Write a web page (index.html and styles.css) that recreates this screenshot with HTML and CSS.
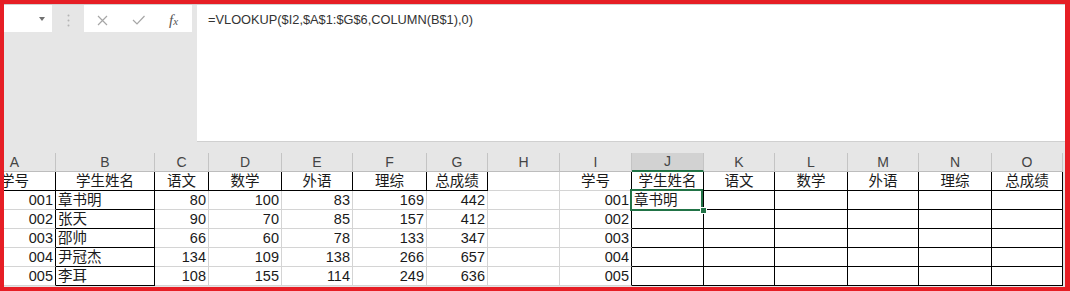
FILE: index.html
```html
<!DOCTYPE html>
<html lang="zh-CN">
<head>
    <meta charset="UTF-8">
    <meta name="viewport" content="width=device-width, initial-scale=1.0">
    <title>VLOOKUP 成绩查询</title>
    <link rel="stylesheet" href="styles.css">
</head>
<body>
    <div class="window">
        <div class="toolbar">
            <div class="namebox"><span class="drop"></span></div>
            <div class="grip">
                <svg width="3" height="13" viewBox="0 0 3 13"><circle cx="1.5" cy="1.5" r="1"/><circle cx="1.5" cy="6.5" r="1"/><circle cx="1.5" cy="11.5" r="1"/></svg>
            </div>
            <div class="fnbox">
                <svg class="ico cancel" width="11" height="11" viewBox="0 0 11 11"><path d="M1 1L10 10M10 1L1 10"/></svg>
                <svg class="ico enter" width="13" height="10" viewBox="0 0 13 10"><path d="M1 5L5 9L12.5 1"/></svg>
                <span class="fx">f<span>x</span></span>
            </div>
            <div class="formula">=VLOOKUP($I2,$A$1:$G$6,COLUMN(B$1),0)</div>
        </div>

        <div class="sheet">
            <div class="grid">
                <!-- column headers -->
                <div class="c h">A</div>
                <div class="c h">B</div>
                <div class="c h">C</div>
                <div class="c h">D</div>
                <div class="c h">E</div>
                <div class="c h">F</div>
                <div class="c h">G</div>
                <div class="c h">H</div>
                <div class="c h">I</div>
                <div class="c h hsel">J</div>
                <div class="c h">K</div>
                <div class="c h">L</div>
                <div class="c h">M</div>
                <div class="c h">N</div>
                <div class="c h">O</div>

                <!-- row 1 -->
                <div class="c ctr br bb">学号</div>
                <div class="c ctr br bb">学生姓名</div>
                <div class="c ctr br bb">语文</div>
                <div class="c ctr br bb">数学</div>
                <div class="c ctr br bb">外语</div>
                <div class="c ctr br bb">理综</div>
                <div class="c ctr br bb">总成绩</div>
                <div class="c"></div>
                <div class="c ctr br">学号</div>
                <div class="c ctr br bb">学生姓名</div>
                <div class="c ctr br bb">语文</div>
                <div class="c ctr br bb">数学</div>
                <div class="c ctr br bb">外语</div>
                <div class="c ctr br bb">理综</div>
                <div class="c ctr br bb">总成绩</div>

                <!-- row 2 -->
                <div class="c num br">001</div>
                <div class="c br bb">章书明</div>
                <div class="c num">80</div>
                <div class="c num">100</div>
                <div class="c num">83</div>
                <div class="c num">169</div>
                <div class="c num">442</div>
                <div class="c"></div>
                <div class="c num br">001</div>
                <div class="c br bb sel">章书明</div>
                <div class="c br bb"></div>
                <div class="c br bb"></div>
                <div class="c br bb"></div>
                <div class="c br bb"></div>
                <div class="c br bb"></div>

                <!-- row 3 -->
                <div class="c num br">002</div>
                <div class="c br bb">张天</div>
                <div class="c num">90</div>
                <div class="c num">70</div>
                <div class="c num">85</div>
                <div class="c num">157</div>
                <div class="c num">412</div>
                <div class="c"></div>
                <div class="c num br">002</div>
                <div class="c br bb"></div>
                <div class="c br bb"></div>
                <div class="c br bb"></div>
                <div class="c br bb"></div>
                <div class="c br bb"></div>
                <div class="c br bb"></div>

                <!-- row 4 -->
                <div class="c num br">003</div>
                <div class="c br bb">邵帅</div>
                <div class="c num">66</div>
                <div class="c num">60</div>
                <div class="c num">78</div>
                <div class="c num">133</div>
                <div class="c num">347</div>
                <div class="c"></div>
                <div class="c num br">003</div>
                <div class="c br bb"></div>
                <div class="c br bb"></div>
                <div class="c br bb"></div>
                <div class="c br bb"></div>
                <div class="c br bb"></div>
                <div class="c br bb"></div>

                <!-- row 5 -->
                <div class="c num br">004</div>
                <div class="c br bb">尹冠杰</div>
                <div class="c num">134</div>
                <div class="c num">109</div>
                <div class="c num">138</div>
                <div class="c num">266</div>
                <div class="c num">657</div>
                <div class="c"></div>
                <div class="c num br">004</div>
                <div class="c br bb"></div>
                <div class="c br bb"></div>
                <div class="c br bb"></div>
                <div class="c br bb"></div>
                <div class="c br bb"></div>
                <div class="c br bb"></div>

                <!-- row 6 -->
                <div class="c num br">005</div>
                <div class="c br bb">李耳</div>
                <div class="c num">108</div>
                <div class="c num">155</div>
                <div class="c num">114</div>
                <div class="c num">249</div>
                <div class="c num">636</div>
                <div class="c"></div>
                <div class="c num br">005</div>
                <div class="c br bb"></div>
                <div class="c br bb"></div>
                <div class="c br bb"></div>
                <div class="c br bb"></div>
                <div class="c br bb"></div>
                <div class="c br bb"></div>
            </div>
        </div>
    </div>
</body>
</html>
```

FILE: styles.css
```css
body {
    margin: 0;
    font-family: "Liberation Sans", "Noto Sans CJK SC", sans-serif;
}
.window {
    width: 1070px;
    height: 291px;
    box-sizing: border-box;
    border: 4px solid #e61e25;
    border-right-width: 5px;
    background-color: #e6e6e6;
    display: flex;
    flex-direction: column;
    overflow: hidden;
}

/* formula bar */
.toolbar {
    height: 149px;
    flex-shrink: 0;
    box-sizing: border-box;
    border-top: 1px solid #d0d0d0;
    display: flex;
    align-items: flex-start;
}
.namebox {
    width: 48px;
    height: 27px;
    box-sizing: border-box;
    background-color: #fff;
    display: flex;
    justify-content: flex-end;
    align-items: center;
    padding: 1px 7px 0 0;
}
.drop {
    width: 0;
    height: 0;
    border-left: 3px solid transparent;
    border-right: 3px solid transparent;
    border-top: 4px solid #707070;
}
.grip {
    width: 32px;
    height: 27px;
    display: flex;
    justify-content: center;
    align-items: center;
    padding-top: 3px;
    box-sizing: border-box;
}
.grip svg {
    fill: #b4b4b4;
}
.fnbox {
    width: 108px;
    height: 27px;
    box-sizing: border-box;
    background-color: #fff;
    display: flex;
    align-items: center;
    padding: 3px 0 0 13px;
}
.ico {
    fill: none;
    stroke: #a6a6a6;
    stroke-width: 1.2;
}
.enter {
    margin-left: 24px;
}
.fx {
    margin-left: 24px;
    font-family: "Liberation Serif", serif;
    font-style: italic;
    font-size: 15px;
    color: #555;
    line-height: 1;
}
.fx span {
    font-size: 11px;
}
.formula {
    flex: 1;
    height: 137px;
    margin-left: 5px;
    box-sizing: border-box;
    background-color: #fff;
    border-bottom: 1px solid #d0d0d0;
    padding: 7px 11px;
    font-size: 12.8px;
    line-height: 16px;
    color: #333;
}

/* worksheet */
.sheet {
    flex: 1;
    overflow: hidden;
}
.grid {
    display: grid;
    grid-template-columns: 82px 99px 54px 73px 71px 74px 61px 72px 72px 72px 71px 73px 71px 73px 71px;
    grid-auto-rows: 19px;
    margin-left: -30px;
    width: max-content;
}
.c {
    box-sizing: border-box;
    border-right: 1px solid #d4d4d4;
    border-bottom: 1px solid #d4d4d4;
    background-color: #fff;
    padding: 0 2px;
    font-size: 14.5px;
    line-height: 18px;
    color: #1a1a1a;
    white-space: nowrap;
}
.h {
    background-color: #e6e6e6;
    border-right-color: #c4c4c4;
    border-bottom-color: #bdbdbd;
    text-align: center;
    font-size: 14px;
    color: #444;
}
.hsel {
    background-color: #d2d2d2;
    border-bottom: 2px solid #217346;
    line-height: 17px;
}
.ctr {
    text-align: center;
}
.num {
    text-align: right;
}
.br {
    border-right-color: #000;
}
.bb {
    border-bottom-color: #000;
}
.sel {
    position: relative;
}
.sel::after {
    content: "";
    position: absolute;
    left: -2px;
    top: -2px;
    right: 0;
    bottom: -2px;
    border: 2px solid #217346;
    z-index: 1;
}
.sel::before {
    content: "";
    position: absolute;
    right: -4px;
    bottom: -5px;
    width: 7px;
    height: 7px;
    box-sizing: border-box;
    background-color: #217346;
    border: 1px solid #fff;
    z-index: 2;
}
```
